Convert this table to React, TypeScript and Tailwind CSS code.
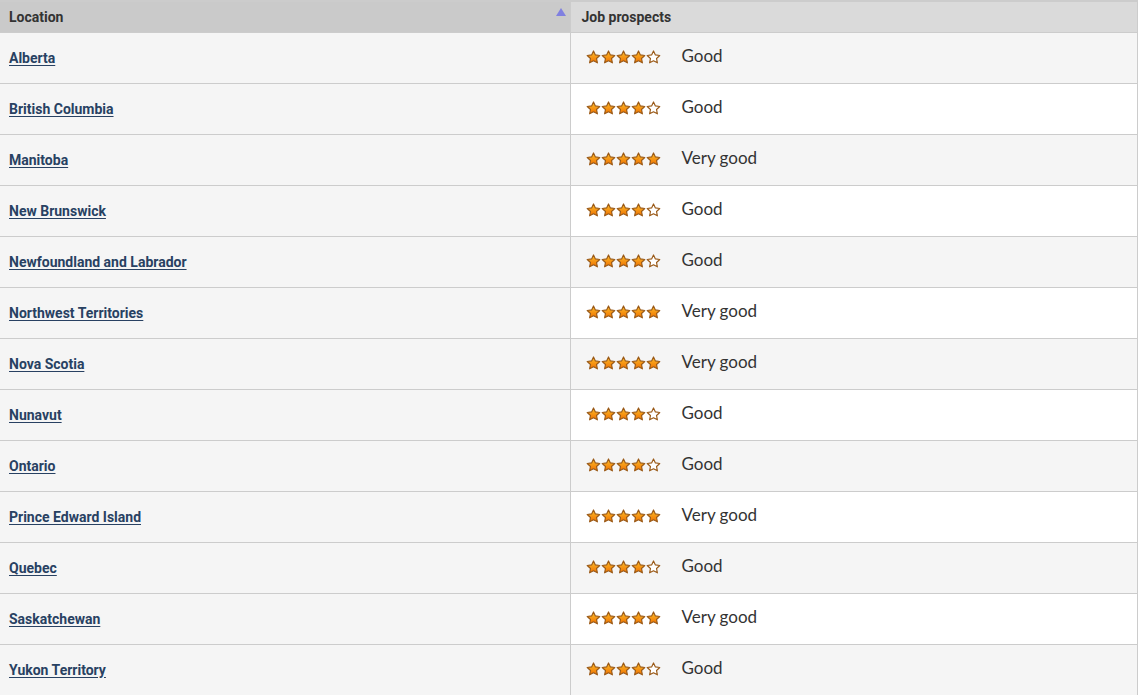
const rows: [string, number][] = [
  ["Alberta", 4],
  ["British Columbia", 4],
  ["Manitoba", 5],
  ["New Brunswick", 4],
  ["Newfoundland and Labrador", 4],
  ["Northwest Territories", 5],
  ["Nova Scotia", 5],
  ["Nunavut", 4],
  ["Ontario", 4],
  ["Prince Edward Island", 5],
  ["Quebec", 4],
  ["Saskatchewan", 5],
  ["Yukon Territory", 4],
];

function Star({ filled }: { filled: boolean }) {
  return (
    <svg width="15" height="14" viewBox="0 0 24 23" className="block">
      <defs>
        <linearGradient id="starFill" x1="0" y1="0" x2="0" y2="1">
          <stop offset="0" stopColor="#ffc02a" />
          <stop offset="1" stopColor="#ee7000" />
        </linearGradient>
      </defs>
      <path
        d="M12 1.5l3.1 6.6 7.2.9-5.3 5 1.4 7.1L12 17.6l-6.4 3.5 1.4-7.1-5.3-5 7.2-.9z"
        fill={filled ? "url(#starFill)" : "#ffffff"}
        stroke="#9a5a18"
        strokeWidth="1.9"
        strokeLinejoin="round"
      />
    </svg>
  );
}

export default function App() {
  return (
    <div className="w-[1138px] h-[695px] overflow-hidden bg-white font-['Roboto',sans-serif]">
      <table className="w-[1138px] table-fixed border-collapse border-t-2 border-r border-[#cccccc]">
        <thead>
          <tr className="h-[31px] text-[14px] font-bold text-[#333333]">
            <th className="w-[570px] bg-[#cacaca] border-r border-b border-[#cccccc] px-[9px] pt-[1px] text-left relative">
              Location
              <span className="absolute right-[4px] top-[6px] w-0 h-0 border-l-[5px] border-r-[5px] border-b-[8px] border-l-transparent border-r-transparent border-b-[#8080e0]" />
            </th>
            <th className="bg-[#dadada] border-b border-[#cccccc] px-[11px] pt-[1px] text-left">
              Job prospects
            </th>
          </tr>
        </thead>
        <tbody>
          {rows.map(([name, stars], i) => (
            <tr key={name} className="h-[51px] border-b border-[#cccccc]">
              <td className="bg-[#f5f5f5] border-r border-[#cccccc] px-[9px]">
                <a
                  href="#"
                  className="text-[14px] font-bold text-[#284162] underline underline-offset-2"
                >
                  {name}
                </a>
              </td>
              <td className={(i % 2 === 0 ? "bg-[#f5f5f5]" : "bg-white") + " pl-[15px]"}>
                <div className="flex items-center -mt-[2px]">
                  <div className="flex w-[96px] mt-[1px]">
                    {[0, 1, 2, 3, 4].map((k) => (
                      <Star key={k} filled={k < stars} />
                    ))}
                  </div>
                  <span className="font-['Lato',sans-serif] text-[17px] text-[#333333] -mt-[2px]">
                    {stars === 5 ? "Very good" : "Good"}
                  </span>
                </div>
              </td>
            </tr>
          ))}
        </tbody>
      </table>
    </div>
  );
}
